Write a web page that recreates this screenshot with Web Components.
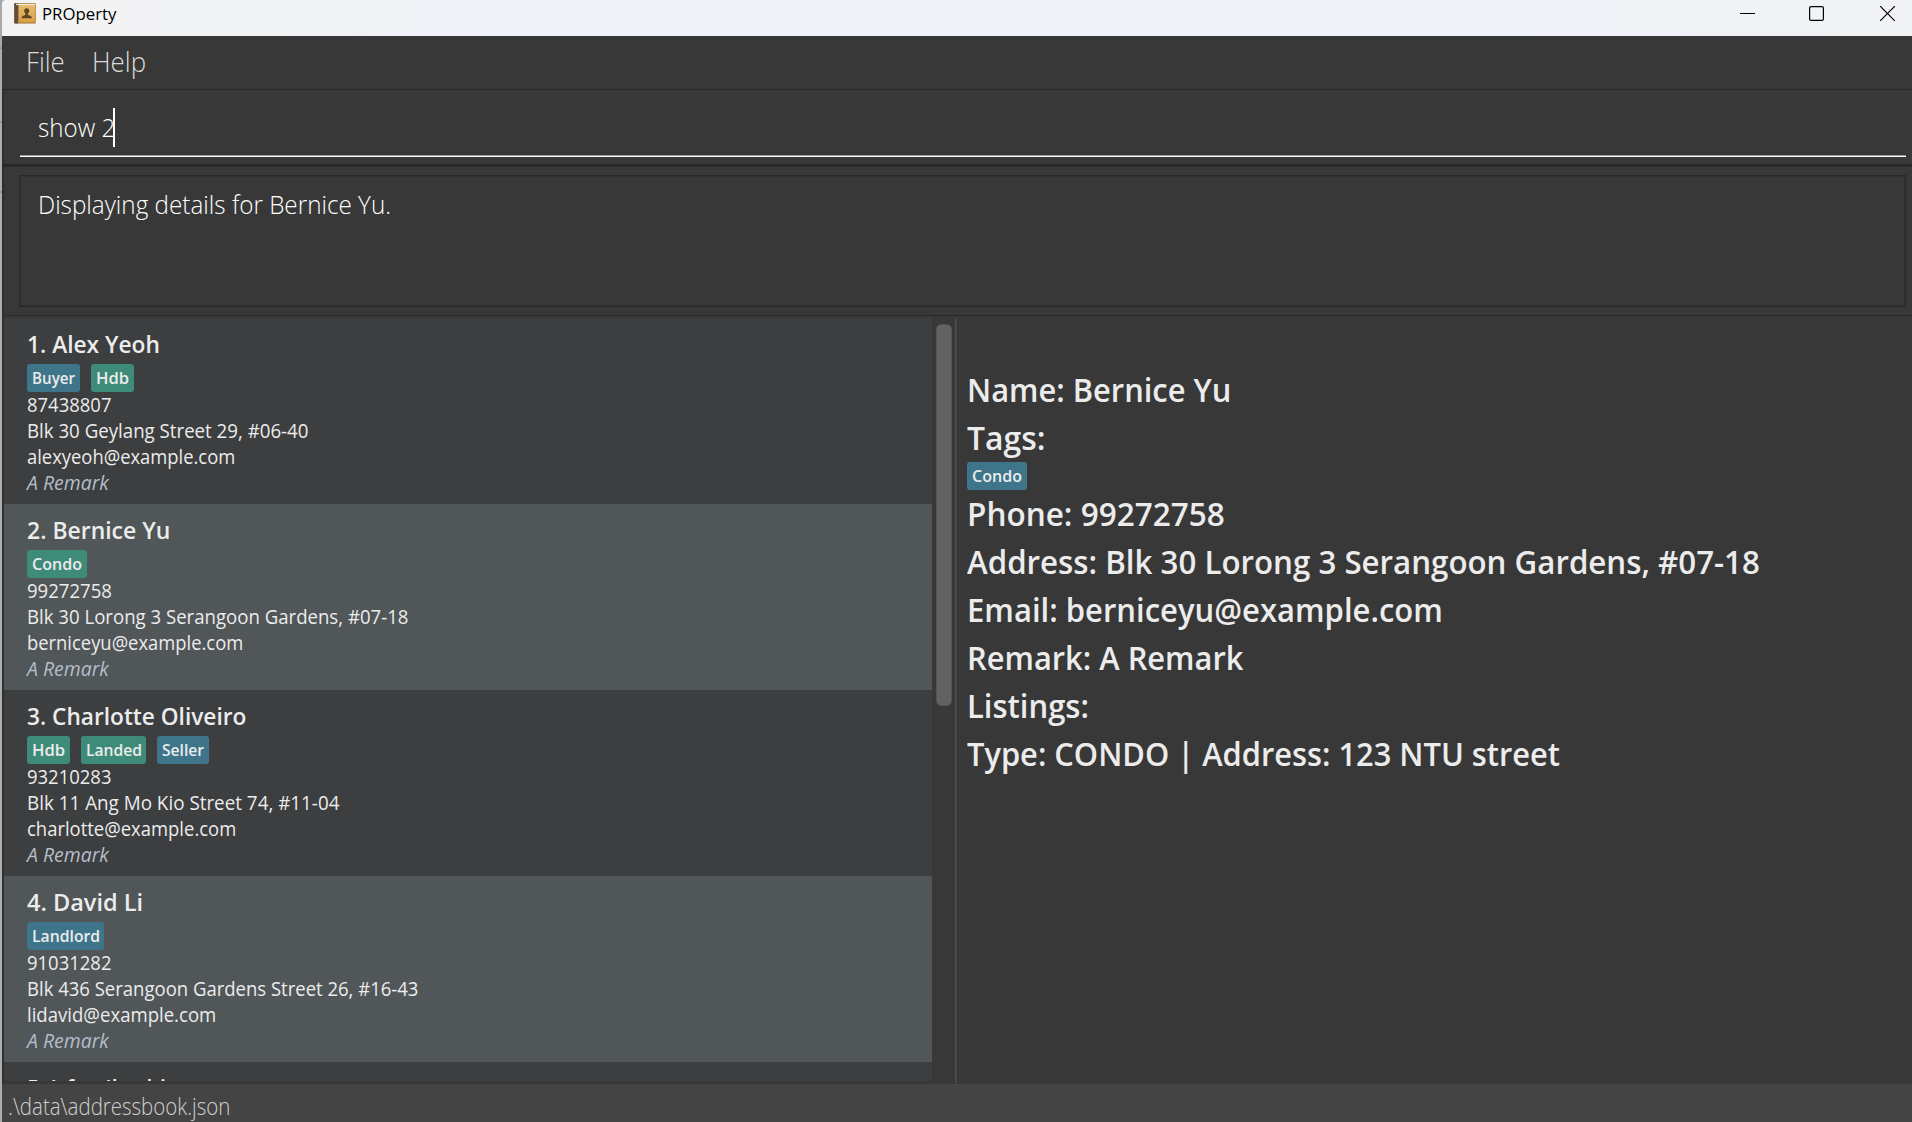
<!DOCTYPE html>
<html lang="en">
<head>
<meta charset="utf-8">
<title>PROperty</title>
<style>
html,body{margin:0;height:100%;background:#383838;overflow:hidden}
body{font-family:"Open Sans","Noto Sans",sans-serif;color:#ececec}
</style>
</head>
<body>
<property-app></property-app>
<script>
const define = (name, html, setup) => customElements.define(name, class extends HTMLElement {
  connectedCallback() {
    if (this.shadowRoot) return;
    const root = this.attachShadow({ mode: 'open' });
    const t = document.createElement('template');
    t.innerHTML = typeof html === 'function' ? html(this) : html;
    root.append(t.content.cloneNode(true));
    if (setup) setup(this, root);
  }
});

// One line of text, condensed horizontally so that its ink ends at the width given in "w".
const pen = document.createElement('canvas').getContext('2d');
define('fit-text', el => `<style>:host{display:block;width:${el.getAttribute('w')}px;white-space:nowrap}
span{display:inline-block;transform-origin:0 50%;white-space:pre}</style><span>${el.getAttribute('text')}</span>`, (el, root) => {
  const s = getComputedStyle(el);
  pen.font = `${s.fontStyle} ${s.fontWeight} ${s.fontSize} ${s.fontFamily}`;
  const right = pen.measureText(el.getAttribute('text')).actualBoundingBoxRight;
  root.querySelector('span').style.transform = `scaleX(${(+el.getAttribute('w') / right).toFixed(4)})`;
});

define('tag-chip', el => `<style>:host{display:block;box-sizing:border-box;height:28px;padding-left:5px;border-radius:3px;
width:${el.getAttribute('w')}px;background:${el.getAttribute('tone') === 'green' ? '#3f8b79' : '#3e758b'};
font-size:16.3px;font-weight:600;line-height:28px;color:#ececec}
</style>
<fit-text w="${el.getAttribute('w') - 10}" text="${el.getAttribute('label')}"></fit-text>`);

define('title-bar', `<style>
:host{display:flex;box-sizing:border-box;height:36px;flex:none;background:linear-gradient(90deg,#f3f3f3,#f0f3f8 25%,#f0f3f8 80%,#f1f3f5);border-top-left-radius:4px;color:#000;padding-left:12px;line-height:28px;font-size:16.8px}
.book{margin:2px 6px 0 0;width:22px;height:22px;flex:none}
.ctl{margin-left:auto;display:flex;gap:54px;padding:6px 17px 0 0}
.ctl svg{display:block}
</style>
<svg class="book" viewBox="0 0 22 22"><defs><linearGradient id="g" x1="0" y1="0" x2="0" y2="1"><stop offset="0" stop-color="#e9bd72"/><stop offset="1" stop-color="#d8a040"/></linearGradient></defs>
<rect x=".3" y="1" width="21.5" height="20.5" rx="1" fill="#9a7138"/><rect x=".3" y="1" width="4" height="20.5" rx="1" fill="#5f4d40"/><rect x="4" y="2" width="17.3" height="18.5" fill="url(#g)"/><rect x="2" y="1.7" width="19" height="1.4" fill="#f2ead8"/><rect x="4" y="3" width="1" height="18" fill="#b4863c"/>
<path d="M12.7 6.2c1.8 0 2.6 1.2 2.5 2.8-.1 1.300-.6 2-1.200 2.600v1.300c1.600.4 3.700 1 4 3.300H7.400c.3-2.300 2.400-2.900 4-3.300v-1.300c-.6-.6-1.100-1.300-1.200-2.600-.1-1.600.7-2.800 2.500-2.800z" fill="#5d452a"/></svg>
<fit-text w="75" text="PROperty"></fit-text>
<div class="ctl">
<svg width="15" height="15"><path d="M0 7.500H15" stroke="#000"/></svg>
<svg width="15" height="15"><rect x=".6" y=".6" width="13.800" height="13.800" rx="1.500" fill="none" stroke="#000" stroke-width="1.200"/></svg>
<svg width="15" height="15" style="margin-left:2px"><path d="M0 0L15 15M15 0L0 15" stroke="#000" stroke-width="1.200"/></svg>
</div>`);

define('menu-bar', `<style>:host{display:flex;box-sizing:border-box;height:53px;flex:none;gap:28px;padding-left:24px;font-size:27px;font-weight:300;line-height:52px;color:#dcdcdc}</style>
<fit-text w="38" text="File"></fit-text><fit-text w="53" text="Help"></fit-text>`);

define('command-box', `<style>:host{display:block;box-sizing:border-box;height:76px;flex:none;border:solid #292929;border-width:1px 0 1px 2px;border-left-color:#2d2d2d;padding:0 6px 0 16px}
.in{box-sizing:border-box;height:67px;border-bottom:1px solid #fff;box-shadow:inset 0 -1px #999;padding:18px 0 0 18px;display:flex;align-items:flex-start;color:#fff;font-size:25px;font-weight:300;line-height:38px}
i{width:2px;height:39px;background:#fff;margin-left:-1px}</style>
<div class="in"><fit-text w="76" text="show 2"></fit-text><i></i></div>`);

define('result-display', `<style>:host{display:block;box-sizing:border-box;height:151px;flex:none;border:solid #292929;border-width:2px 0 1px 2px;border-left-color:#2d2d2d;padding:8px 6px 7px 15px}
.box{box-sizing:border-box;height:132px;border:1px solid #282828;box-shadow:inset 0 0 0 1px #303030;padding:8px 0 0 18px;color:#fff;font-size:25.500px;font-weight:300;line-height:40px}</style>
<div class="box"><fit-text w="352" text="Displaying details for Bernice Yu."></fit-text></div>`);

define('person-card', el => {
  const p = people[+el.getAttribute('index')];
  return `<style>:host{display:block;box-sizing:border-box;height:186px;flex:none;padding:8px 0 0 23px;background:#3c3e3f;font-size:19.200px;line-height:26px}
:host([alt]){background:#515658}
.name{font-size:23.500px;font-weight:600;line-height:36px}
.tags{display:flex;gap:11px;padding-top:2px}
.remark{font-style:italic;color:#b3bdca}</style>
<fit-text class="name" w="${p.name[1]}" text="${p.name[0]}"></fit-text>
<div class="tags">${p.tags.map(t => `<tag-chip label="${t[0]}" w="${t[1]}" tone="${t[2]}"></tag-chip>`).join('')}</div>
${p.lines.map(l => `<fit-text w="${l[1]}" text="${l[0]}"></fit-text>`).join('')}
${p.lines.length ? '<fit-text class="remark" w="82.500" text="A Remark"></fit-text>' : ''}`;
});

const people = [
  { name: ['1. Alex Yeoh', 132], tags: [['Buyer', 53, 'blue'], ['Hdb', 43, 'green']], lines: [['87438807', 83.5], ['Blk 30 Geylang Street 29, #06-40', 280.5], ['alexyeoh@example.com', 207.5]] },
  { name: ['2. Bernice Yu', 141.5], tags: [['Condo', 60, 'green']], lines: [['99272758', 84], ['Blk 30 Lorong 3 Serangoon Gardens, #07-18', 380.5], ['berniceyu@example.com', 215.5]] },
  { name: ['3. Charlotte Oliveiro', 219], tags: [['Hdb', 43, 'green'], ['Landed', 65, 'green'], ['Seller', 52, 'blue']], lines: [['93210283', 83.5], ['Blk 11 Ang Mo Kio Street 74, #11-04', 312.5], ['charlotte@example.com', 208.5]] },
  { name: ['4. David Li', 114.5], tags: [['Landlord', 77, 'blue']], lines: [['91031282', 83.5], ['Blk 436 Serangoon Gardens Street 26, #16-43', 390.5], ['lidavid@example.com', 188.5]] },
  { name: ['5. Irfan Ibrahim', 158], tags: [], lines: [] }
];

define('person-list', `<style>:host{display:flex;width:951px;height:763px;flex:none}
.cells{width:928px;height:763px;display:flex;flex-direction:column;overflow:hidden}
.bar{width:23px;box-sizing:border-box;padding:6px 0 0 4px}
.thumb{box-sizing:border-box;width:16px;height:382px;border-radius:5px;background:#626262;border:1px solid #525252}</style>
<div class="cells">${people.map((p, i) => `<person-card index="${i}" ${i % 2 ? 'alt' : ''}></person-card>`).join('')}</div>
<div class="bar"><div class="thumb"></div></div>`);

define('person-detail', `<style>:host{display:block;flex:1;box-sizing:border-box;height:765px;border-left:1px solid #505050;box-shadow:inset 1px 0 #424242;padding:48px 0 0 11px;font-size:33px;font-weight:580;line-height:48px}
.tags{display:flex;height:28px}</style>
<fit-text w="262.500" text="Name: Bernice Yu"></fit-text>
<fit-text w="76.500" text="Tags:"></fit-text>
<div class="tags"><tag-chip label="Condo" w="60" tone="blue"></tag-chip></div>
<fit-text w="257" text="Phone: 99272758"></fit-text>
<fit-text w="792" text="Address: Blk 30 Lorong 3 Serangoon Gardens, #07-18"></fit-text>
<fit-text w="473.500" text="Email: berniceyu@example.com"></fit-text>
<fit-text w="276.500" text="Remark: A Remark"></fit-text>
<fit-text w="120" text="Listings:"></fit-text>
<fit-text w="593" text="Type: CONDO | Address: 123 NTU street"></fit-text>`);

define('status-bar', `<style>:host{display:block;box-sizing:border-box;height:38px;flex:none;background:#444;padding:6px 0 0 6px;font-size:23px;font-weight:300;line-height:32px;color:#d0d0d0}</style>
<fit-text w="221" text=".\\data\\addressbook.json"></fit-text>`);

define('property-app', `<style>:host{display:flex;height:1122px;width:1912px}
.edge{width:2px;flex:none;background:linear-gradient(#a9a9a9 0 47px,#969696 47px 49px,#adadad 49px 121px,#969696 121px 123px,#adadad 123px 191px,#969696 191px 193px,#adadad 193px)}
.win{flex:1;display:flex;flex-direction:column;background:linear-gradient(#a9a9a9 36px,#383838 36px)}
.panes{display:flex;box-sizing:border-box;height:768px;flex:none;padding-top:2px;border-left:2px solid #303030}</style>
<div class="edge"></div><div class="win"><title-bar></title-bar><menu-bar></menu-bar><command-box></command-box><result-display></result-display>
<div class="panes"><person-list></person-list><person-detail></person-detail></div><status-bar></status-bar></div>`);
</script>
</body>
</html>
